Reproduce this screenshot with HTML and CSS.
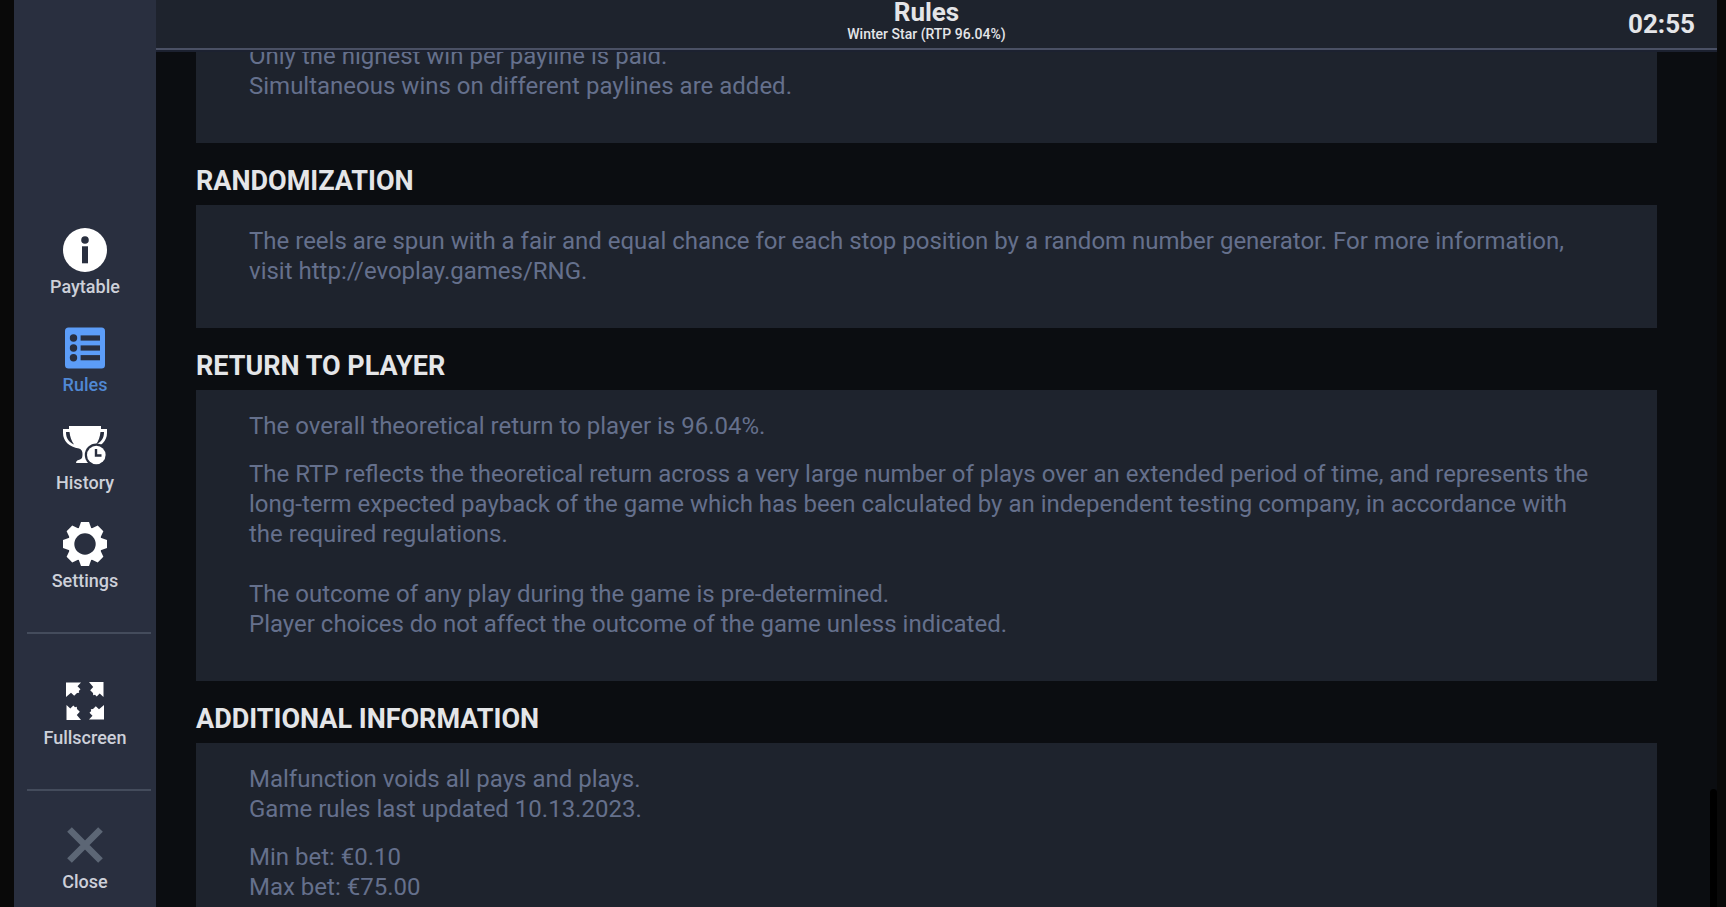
FILE: index.html
```
<!DOCTYPE html>
<html lang="en">
<head>
    <meta charset="UTF-8">
    <meta name="viewport" content="width=device-width, initial-scale=1.0">
    <title>Winter Star - Rules</title>
    <link rel="stylesheet" href="styles.css">
</head>
<body>
    <nav class="sidebar">
        <div class="menu">
            <button class="menu-item" type="button">
                <svg class="icon" viewBox="0 0 44 44">
                    <circle cx="22" cy="22" r="22" fill="#fff"/>
                    <circle class="cut" cx="22" cy="12" r="3.8"/>
                    <rect class="cut" x="19" y="18.3" width="6" height="17"/>
                </svg>
                <span>Paytable</span>
            </button>
            <button class="menu-item active" type="button">
                <svg class="icon" viewBox="0 0 44 44">
                    <rect x="2" y="1.5" width="40" height="41" rx="3.5" fill="#5c9df8"/>
                    <g class="cut">
                        <circle cx="10.5" cy="12" r="3.7"/>
                        <circle cx="10.5" cy="22" r="3.7"/>
                        <circle cx="10.5" cy="31.7" r="3.7"/>
                        <rect x="17.6" y="9.4" width="19.4" height="5.2"/>
                        <rect x="17.6" y="19.4" width="19.4" height="5.2"/>
                        <rect x="17.6" y="29.1" width="19.4" height="5.2"/>
                    </g>
                </svg>
                <span>Rules</span>
            </button>
            <button class="menu-item" type="button">
                <svg class="icon" viewBox="0 0 44 44">
                    <path fill="#fff" fill-rule="evenodd" d="M6 2H38V5H44V9C44 17 38 23 28 24.5C25.5 27 25 29 25 33C25 35.5 27 36 30 36V39H13C13 36.5 15 36 17 35.5C19 35 19.5 33 19.5 30C19.5 27 18.5 25.5 16 24.5C6 23 0 17 0 9V5H6ZM3 8C3 14 5.5 18 11 20.5C8.5 17 7 13 6.5 8ZM41 8C41 14 38.5 18 33 20.5C35.5 17 37 13 37.5 8Z"/>
                    <circle class="cut" cx="33.3" cy="31" r="11.5"/>
                    <circle cx="33.3" cy="31" r="9.3" fill="#fff"/>
                    <path class="cut" d="M31.8 25H34.2V30.3H38.5V32.7H31.8Z"/>
                </svg>
                <span>History</span>
            </button>
            <button class="menu-item" type="button">
                <svg class="icon" viewBox="0 0 44 44">
                    <g fill="#fff">
                        <circle cx="22" cy="22" r="17"/>
                        <path id="teeth" d="M18 0H26L28.500 7V37L26 44H18L15.500 37V7Z"/>
                        <use href="#teeth" transform="rotate(45 22 22)"/>
                        <use href="#teeth" transform="rotate(90 22 22)"/>
                        <use href="#teeth" transform="rotate(135 22 22)"/>
                    </g>
                    <circle class="cut" cx="22" cy="22" r="10.7"/>
                </svg>
                <span>Settings</span>
            </button>
        </div>
        <div class="menu menu-fullscreen">
            <button class="menu-item" type="button">
                <svg class="icon" viewBox="0 0 44 44">
                    <g fill="#fff">
                        <path id="arrow" d="M3 3.5H18L14.5 7.3L17.5 10.3L15.8 12L16.2 13.8L14 14L11.2 16.8L8 13.8L3 18Z"/>
                        <use href="#arrow" transform="rotate(90 22 22)"/>
                        <use href="#arrow" transform="rotate(180 22 22)"/>
                        <use href="#arrow" transform="rotate(270 22 22)"/>
                    </g>
                </svg>
                <span>Fullscreen</span>
            </button>
        </div>
        <div class="menu menu-close">
            <button class="menu-item" type="button">
                <svg class="icon" viewBox="0 0 44 44">
                    <path d="M6.5 6.5L37.5 37.5M37.5 6.5L6.5 37.5" stroke="#5c6675" stroke-width="6.6"/>
                </svg>
                <span>Close</span>
            </button>
        </div>
    </nav>

    <div class="page">
        <header>
            <div class="title">
                <h1>Rules</h1>
                <p>Winter Star (RTP 96.04%)</p>
            </div>
            <time>02:55</time>
        </header>
        <main>
            <section class="card card-first">
                <p>Only the highest win per payline is paid.<br>
                Simultaneous wins on different paylines are added.</p>
            </section>

            <h2>RANDOMIZATION</h2>
            <section class="card">
                <p>The reels are spun with a fair and equal chance for each stop position by a random number generator. For more information,<br>
                visit http://evoplay.games/RNG.</p>
            </section>

            <h2>RETURN TO PLAYER</h2>
            <section class="card">
                <p>The overall theoretical return to player is 96.04%.</p>
                <p>The RTP reflects the theoretical return across a very large number of plays over an extended period of time, and represents the<br>
                long-term expected payback of the game which has been calculated by an independent testing company, in accordance with<br>
                the required regulations.<br><br>
                The outcome of any play during the game is pre-determined.<br>
                Player choices do not affect the outcome of the game unless indicated.</p>
            </section>

            <h2>ADDITIONAL INFORMATION</h2>
            <section class="card">
                <p>Malfunction voids all pays and plays.<br>
                Game rules last updated 10.13.2023.</p>
                <p>Min bet: €0.10<br>
                Max bet: €75.00</p>
            </section>
            <div class="scroll-thumb"></div>
        </main>
    </div>
</body>
</html>
```
FILE: styles.css
```
* {
    box-sizing: border-box;
}
body {
    display: flex;
    height: 100vh;
    margin: 0;
    padding: 0 9px 0 14px;
    overflow: hidden;
    background-color: #090909;
    color: #e4e5e8;
    font-family: Roboto, sans-serif;
}
h1, h2, p {
    margin: 0;
}

/* left menu */
.sidebar {
    display: flex;
    flex-direction: column;
    justify-content: flex-end;
    flex: none;
    width: 142px;
    padding: 0 5px 14px 13px;
    background-color: #292f3f;
}
.menu {
    display: flex;
    flex-direction: column;
    gap: 28px;
    padding-right: 8px;
}
.menu-fullscreen {
    margin-top: 40px;
    padding-top: 45px;
    padding-bottom: 40px;
    border-top: 2px solid #444c5c;
}
.menu-close {
    padding-top: 32px;
    border-top: 2px solid #444c5c;
}
.menu-item {
    display: flex;
    flex-direction: column;
    align-items: center;
    gap: 4px;
    padding: 0;
    border: none;
    background: none;
    color: #cdd0d9;
    font-family: inherit;
    font-size: 18px;
    font-weight: 500;
    line-height: 22px;
    cursor: pointer;
}
.menu-item.active {
    color: #5088d4;
}
.icon {
    width: 44px;
    height: 44px;
}
.cut {
    fill: #292f3f;
}

/* right side */
.page {
    display: flex;
    flex-direction: column;
    flex: 1;
    min-width: 0;
}
header {
    display: grid;
    grid-template-columns: 1fr auto 1fr;
    align-items: center;
    flex: none;
    height: 52px;
    padding: 0 22px 4px 2px;
    background: linear-gradient(#1e232d 48px, #4a5064 48px, #4a5064 50px, #1c2130 50px);
}
.title {
    grid-column: 2;
    align-self: start;
    text-align: center;
}
h1 {
    font-size: 26px;
    line-height: 24px;
}
.title p {
    font-size: 14px;
    font-weight: 500;
    line-height: 20px;
}
time {
    justify-self: end;
    font-size: 26px;
    font-weight: bold;
}
main {
    position: relative;
    flex: 1;
    min-height: 0;
    padding: 0 60px 0 40px;
    overflow: hidden;
    background-color: #0b0d11;
}
h2 {
    padding: 22px 0 8px;
    font-size: 27px;
    line-height: 32px;
}
.card {
    padding: 21px 53px 42px;
    background-color: #1e232d;
    color: #65708c;
    font-size: 24px;
    line-height: 30px;
}
.card p + p {
    margin-top: 18px;
}
/* scrolled part way under the header */
.card-first {
    margin-top: -32px;
}
.scroll-thumb {
    position: absolute;
    right: 0;
    bottom: 0;
    width: 7px;
    height: 118px;
    border-radius: 4px 4px 0 0;
    background-color: #000;
}
```
